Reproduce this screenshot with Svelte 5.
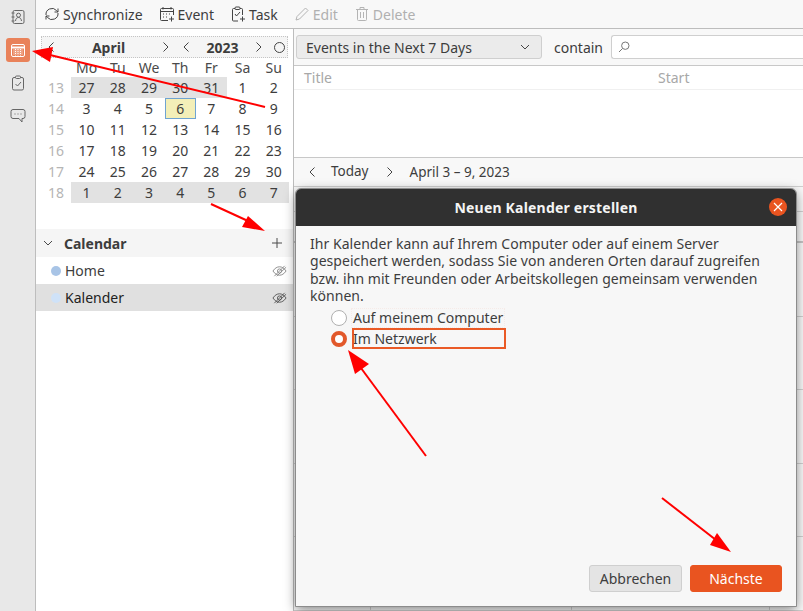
<script lang="ts">
	const weeks = [
		{ no: 13, days: [27, 28, 29, 30, 31, 1, 2], other: [0, 1, 2, 3, 4] },
		{ no: 14, days: [3, 4, 5, 6, 7, 8, 9], other: [] },
		{ no: 15, days: [10, 11, 12, 13, 14, 15, 16], other: [] },
		{ no: 16, days: [17, 18, 19, 20, 21, 22, 23], other: [] },
		{ no: 17, days: [24, 25, 26, 27, 28, 29, 30], other: [] },
		{ no: 18, days: [1, 2, 3, 4, 5, 6, 7], other: [0, 1, 2, 3, 4, 5, 6] }
	];
	const weekdays = ['Mo', 'Tu', 'We', 'Th', 'Fr', 'Sa', 'Su'];
	const calendars = [
		{ name: 'Home', color: '#a8c4e6', selected: false },
		{ name: 'Kalender', color: '#cfe2f8', selected: true }
	];
	const hours = [0, 1, 2, 3, 4];
</script>

<div class="app">
	<nav class="rail">
		<button class="rail-btn" aria-label="Address book">
			<svg viewBox="0 0 16 16" width="16" height="16" fill="none" stroke="#666">
				<rect x="3" y="1.5" width="11" height="13" rx="1.5" />
				<circle cx="8.5" cy="6.2" r="2" />
				<path d="M5.5 12c.3-2.5 1.5-3.500 3-3.500s2.700 1 3 3.500M1.500 4h3M1.500 8h3M1.500 12h3" />
			</svg>
		</button>
		<button class="rail-btn active" aria-label="Calendar">
			<svg viewBox="0 0 16 16" width="16" height="16" fill="none" stroke="#fff">
				<rect x="1.5" y="2.5" width="13" height="12" rx="1.5" />
				<path d="M1.5 5.500h13" stroke-width="2" />
				<path d="M3.5 8h9M3.500 10h9M3.500 12h9M5.500 7v6.500M8 7v6.500M10.500 7v6.500" stroke-dasharray="1 1" />
			</svg>
		</button>
		<button class="rail-btn" aria-label="Tasks">
			<svg viewBox="0 0 16 16" width="16" height="16" fill="none" stroke="#666">
				<rect x="2.5" y="2.5" width="11" height="12.5" rx="1.5" />
				<rect x="5.5" y="1" width="5" height="2.5" rx="1" fill="#e8e8e8" />
				<path d="M5.5 9l2 2 3.500-4" />
			</svg>
		</button>
		<button class="rail-btn" aria-label="Chat">
			<svg viewBox="0 0 16 16" width="16" height="16" fill="none" stroke="#666">
				<path d="M3 1.500h10a2 2 0 0 1 2 2v5a2 2 0 0 1-2 2h-1v3.500l-3-3.500H3a2 2 0 0 1-2-2v-5a2 2 0 0 1 2-2z" />
				<path d="M4.500 6h1M7.500 6h1M10.500 6h1" />
			</svg>
		</button>
	</nav>

	<div class="main">
		<header class="toolbar">
			<span class="tool">
				<svg viewBox="0 0 16 16" width="16" height="16" fill="none" stroke="#444">
					<path d="M2 9a6 6 0 0 1 10.500-4.500L14 6M14 7a6 6 0 0 1-10.500 4.500L2 10" />
					<path d="M14 2.500V6h-3.500M2 13.500V10h3.500" />
				</svg>
				Synchronize
			</span>
			<span class="tool">
				<svg viewBox="0 0 16 16" width="16" height="16" fill="none" stroke="#444">
					<path d="M9 14.500H2.500a1 1 0 0 1-1-1v-10a1 1 0 0 1 1-1h11a1 1 0 0 1 1 1V9" />
					<path d="M1.500 5.500h13M4 1v2.500M12 1v2.500M4 8h1M7 8h1M10 8h1M4 11h1M7 11h1M12.500 10.500v5M10 13h5" />
				</svg>
				Event
			</span>
			<span class="tool">
				<svg viewBox="0 0 16 16" width="16" height="16" fill="none" stroke="#444">
					<path d="M8 15H3.500a1 1 0 0 1-1-1V3.500a1 1 0 0 1 1-1h8a1 1 0 0 1 1 1V9" />
					<rect x="5" y="1" width="5" height="2.5" rx="1" fill="#f8f8f8" />
					<path d="M5 8l1.500 2L10 6M12.500 10.500v5M10 13h5" />
				</svg>
				Task
			</span>
			<span class="tool off">
				<svg viewBox="0 0 16 16" width="16" height="16" fill="none" stroke="#b4b4b4">
					<path d="M2 14l1-3.500L11.500 2 14 4.500 5.500 13z" />
				</svg>
				Edit
			</span>
			<span class="tool off">
				<svg viewBox="0 0 16 16" width="16" height="16" fill="none" stroke="#b4b4b4">
					<path d="M2 3.500h12M6 3.500V1.500h4v2M3.500 3.500v10a1 1 0 0 0 1 1h7a1 1 0 0 0 1-1v-10M6.500 6v6M9.500 6v6" />
				</svg>
				Delete
			</span>
		</header>

		<div class="content">
			<aside class="sidebar">
				<div class="minimonth">
					<div class="month-head">
						<span class="chev">
							<svg viewBox="0 0 8 12" width="8" height="12"><path d="M6.500 1.500 2 6l4.500 4.500" /></svg>
						</span>
						<strong class="month">April</strong>
						<span class="chev">
							<svg viewBox="0 0 8 12" width="8" height="12"><path d="M1.500 1.500 6 6l-4.500 4.500" /></svg>
						</span>
						<span class="chev">
							<svg viewBox="0 0 8 12" width="8" height="12"><path d="M6.500 1.500 2 6l4.500 4.500" /></svg>
						</span>
						<strong class="year">2023</strong>
						<span class="chev">
							<svg viewBox="0 0 8 12" width="8" height="12"><path d="M1.500 1.500 6 6l-4.500 4.500" /></svg>
						</span>
						<span class="today-dot"></span>
					</div>
					<div class="month-grid">
						<span></span>
						{#each weekdays as d}
							<span class="wd">{d}</span>
						{/each}
						{#each weeks as w}
							<span class="wk">{w.no}</span>
							{#each w.days as day, i}
								<span class="day" class:other={w.other.includes(i)} class:today={w.no === 14 && day === 6}>{day}</span>
							{/each}
						{/each}
					</div>
				</div>

				<div class="cal-section">
					<div class="cal-head">
						<svg class="cal-caret" viewBox="0 0 10 6" width="10" height="6"><path d="M1 1l4 4 4-4" /></svg>
						<strong>Calendar</strong>
						<svg class="cal-plus" viewBox="0 0 10 10" width="10" height="10"><path d="M5 0v10M0 5h10" /></svg>
					</div>
					{#each calendars as c}
						<div class="cal-row" class:selected={c.selected}>
							<span class="dot" style="background: {c.color}"></span>
							<span class="cal-name">{c.name}</span>
							<svg class="eye" viewBox="0 0 16 12" width="15" height="12" fill="none" stroke={c.selected ? '#555' : '#8a8a8a'}>
								<path d="M1 6c2-3 4.500-4.500 7-4.500S13 3 15 6c-2 3-4.500 4.500-7 4.500S3 9 1 6z" />
								<circle cx="8" cy="6" r="2.200" />
								<path d="M2.500 11.500 13.500.5M5 11.500 15 2" />
							</svg>
						</div>
					{/each}
				</div>
			</aside>

			<section class="pane">
				<div class="filter">
					<div class="select">
						<span>Events in the Next 7 Days</span>
						<svg viewBox="0 0 10 6" width="10" height="6"><path d="M1 1l4 4 4-4" /></svg>
					</div>
					<span class="contain">contain</span>
					<div class="search">
						<svg viewBox="0 0 12 12" width="12" height="12"><circle cx="7.300" cy="4.700" r="3.700" /><path d="M4.500 7.500 1 11" /></svg>
					</div>
				</div>
				<div class="list-head">
					<span class="col-title">Title</span>
					<span>Start</span>
				</div>
				<div class="list-body"></div>
				<div class="week-nav">
					<svg viewBox="0 0 8 12" width="8" height="12"><path d="M6.500 1.500 2 6l4.500 4.500" /></svg>
					<span class="nav-today">Today</span>
					<svg viewBox="0 0 8 12" width="8" height="12"><path d="M1.500 1.500 6 6l-4.500 4.500" /></svg>
					<span class="nav-range">April 3 – 9, 2023</span>
				</div>
				<div class="week-grid">
					<div class="week-header"></div>
					<div class="week-allday"></div>
					{#each hours as h (h)}
						<div class="hour">
							<span></span>
							<span></span>
							<span></span>
						</div>
					{/each}
				</div>
			</section>
		</div>
	</div>

	<div class="dialog" role="dialog" aria-label="Neuen Kalender erstellen">
		<div class="titlebar">
			<span>Neuen Kalender erstellen</span>
			<span class="close">
				<svg viewBox="0 0 10 10" width="10" height="10"><path d="M1 1l8 8M9 1l-8 8" /></svg>
			</span>
		</div>
		<div class="dialog-body">
			<p class="intro">
				Ihr Kalender kann auf Ihrem Computer oder auf einem Server<br />
				gespeichert werden, sodass Sie von anderen Orten darauf zugreifen<br />
				bzw. ihn mit Freunden oder Arbeitskollegen gemeinsam verwenden<br />
				können.
			</p>
			<div class="radio-row">
				<span class="radio"></span>
				<span class="radio-label">Auf meinem Computer</span>
			</div>
			<div class="radio-row">
				<span class="radio on"></span>
				<span class="radio-label focused">Im Netzwerk</span>
			</div>
			<div class="actions">
				<button class="btn">Abbrechen</button>
				<button class="btn primary">Nächste</button>
			</div>
		</div>
	</div>

	<!-- annotation arrows drawn over the screenshot -->
	<svg class="arrows" viewBox="0 0 803 611" width="803" height="611">
		<g stroke="#f00" stroke-width="2" fill="#f00">
			<path d="M265 107 50 55" />
			<path d="M32 51 53 47 50 62z" stroke="none" />
			<path d="M211 204 248 221" />
			<path d="M265 231 248 216 242 227z" stroke="none" />
			<path d="M426 456 358 364" />
			<path d="M348 350 369 364 355 374z" stroke="none" />
			<path d="M662 498 716 540" />
			<path d="M731 552 717 533 710 545z" stroke="none" />
		</g>
	</svg>
</div>

<style>
	:global(body) {
		margin: 0;
		background: #fff;
	}

	.app {
		position: relative;
		display: flex;
		width: 803px;
		height: 611px;
		overflow: hidden;
		font-family: 'Noto Sans', 'Open Sans', sans-serif;
		font-size: 14px;
		color: #3d3d3d;
		background: #fff;
	}

	.rail {
		flex: none;
		width: 35px;
		border-right: 1px solid #bdbdbd;
		background: #e8e8e8;
		display: flex;
		flex-direction: column;
		align-items: center;
		gap: 9px;
		padding-top: 5px;
	}

	.rail-btn {
		width: 24px;
		height: 24px;
		padding: 0;
		border: none;
		border-radius: 3px;
		background: transparent;
		display: flex;
		align-items: center;
		justify-content: center;
	}

	.rail-btn.active {
		background: #e9825a;
	}

	.main {
		flex: 1;
		min-width: 0;
		display: flex;
		flex-direction: column;
	}

	.toolbar {
		flex: none;
		height: 29px;
		box-sizing: border-box;
		display: flex;
		align-items: center;
		gap: 16px;
		padding: 0 8px;
		background: #f8f8f8;
		border-bottom: 1px solid #bdbdbd;
	}

	.tool {
		display: flex;
		align-items: center;
		gap: 3px;
		white-space: nowrap;
	}

	.tool.off {
		color: #b0b0b0;
	}

	.content {
		flex: 1;
		min-height: 0;
		display: flex;
	}

	.sidebar {
		flex: none;
		width: 257px;
		background: #fff;
		border-right: 1px solid #bdbdbd;
		display: flex;
		flex-direction: column;
	}

	.minimonth {
		height: 200px;
		padding: 7px 5px 0 5px;
		box-sizing: border-box;
	}

	.month-head {
		height: 22px;
		width: 247px;
		box-sizing: border-box;
		display: flex;
		align-items: center;
		background: #f5f5f5;
		border: 1px dotted #c4c4c4;
		margin-bottom: -2px;
	}

	.chev {
		flex: none;
		width: 20px;
		display: flex;
		justify-content: center;
	}

	.month-head .chev:first-child {
		margin-left: -1px;
	}

	.chev svg path,
	.week-nav svg path {
		fill: none;
		stroke: #444;
	}

	.month {
		width: 95px;
		text-align: center;
		font-weight: 700;
	}

	.year {
		width: 53px;
		text-align: center;
		font-weight: 700;
	}

	.today-dot {
		width: 9px;
		height: 9px;
		margin-left: 4.5px;
		border: 1px solid #444;
		border-radius: 50%;
	}

	.month-grid {
		display: grid;
		grid-template-columns: 30px repeat(7, 31.2px);
		grid-auto-rows: 21px;
		height: 147px;
		text-align: center;
	}

	.month-grid > span {
		line-height: 21px;
	}

	.month-grid > .wd {
		color: #4a4a4a;
		line-height: 24px;
	}

	.wk {
		color: #b5b5b5;
	}

	.day.other {
		background: #e2e2e2;
	}

	.month-grid > .day.today {
		box-sizing: border-box;
		background: #f3efb8;
		border: 1px solid #6fa4d2;
		line-height: 19px;
	}

	.cal-head {
		height: 28px;
		display: flex;
		align-items: center;
		background: #f5f5f5;
		padding: 0 11px 0 7px;
	}

	.cal-head strong {
		margin-left: 11px;
		flex: 1;
		font-weight: 700;
	}

	.cal-caret path,
	.cal-plus path {
		fill: none;
		stroke: #4a4a4a;
	}

	.cal-row {
		height: 27px;
		display: flex;
		align-items: center;
		padding: 0 6px 0 15px;
	}

	.cal-row.selected {
		background: #e0e0e0;
		color: #222;
	}

	.dot {
		width: 10px;
		height: 10px;
		border-radius: 50%;
		margin-right: 4px;
	}

	.cal-name {
		flex: 1;
	}

	.pane {
		flex: 1;
		min-width: 0;
		display: flex;
		flex-direction: column;
		background: #fff;
	}

	.filter {
		flex: none;
		height: 37px;
		box-sizing: border-box;
		display: flex;
		align-items: center;
		padding: 6px 0 6px 2px;
		background: #f8f8f8;
		border-bottom: 1px solid #c8c8c8;
	}

	.select {
		width: 246px;
		height: 24px;
		box-sizing: border-box;
		display: flex;
		align-items: center;
		justify-content: space-between;
		padding: 0 11px 0 9px;
		background: #ebebeb;
		border: 1px solid #cfcfcf;
		border-radius: 3px;
	}

	.select svg path {
		fill: none;
		stroke: #444;
	}

	.contain {
		margin: 0 8px 0 12px;
	}

	.search {
		flex: 1;
		height: 24px;
		box-sizing: border-box;
		display: flex;
		align-items: center;
		padding-left: 6px;
		background: #fff;
		border: 1px solid #cfcfcf;
		border-right: none;
		border-radius: 3px 0 0 3px;
	}

	.search svg circle,
	.search svg path {
		fill: none;
		stroke: #777;
	}

	.list-head {
		flex: none;
		height: 24px;
		box-sizing: border-box;
		display: flex;
		align-items: center;
		padding-left: 10px;
		color: #a8a8a8;
		border-bottom: 1px solid #f0f0f0;
	}

	.col-title {
		width: 354px;
	}

	.list-body {
		flex: none;
		height: 67px;
		border-bottom: 1px solid #c8c8c8;
	}

	.week-nav {
		flex: none;
		height: 28px;
		display: flex;
		align-items: center;
		gap: 15px;
		padding-left: 14px;
		background: #f8f8f8;
		font-size: 13.500px;
	}

	.nav-today {
		margin: -2px 2px 0 0;
	}

	.nav-range {
		margin-left: 1px;
	}

	.week-grid {
		flex: 1;
		min-height: 0;
		background: #f8f8f8;
		border-top: 1px solid #d0d0d0;
	}

	.week-header {
		height: 24px;
		border-bottom: 1px solid #d0d0d0;
	}

	.week-allday {
		height: 29px;
		border-bottom: 2px solid #c4c4c4;
	}

	.hour {
		height: 73.500px;
		box-sizing: border-box;
		display: grid;
		grid-template-columns: 77px 201px 198px 1fr;
		border-bottom: 1px solid #d0d0d0;
	}

	.hour span {
		border-right: 1px solid #d0d0d0;
	}

	.dialog {
		position: absolute;
		left: 296px;
		top: 189px;
		width: 500px;
		height: 417px;
		display: flex;
		flex-direction: column;
		background: #f7f7f7;
		border-radius: 5px 5px 0 0;
		outline: 1px solid #8c8c8c;
		box-shadow: 0 3px 12px rgba(0, 0, 0, 0.5);
	}

	.titlebar {
		position: relative;
		flex: none;
		height: 37px;
		display: flex;
		align-items: center;
		justify-content: center;
		background: #303030;
		border-radius: 5px 5px 0 0;
		color: #f4f4f4;
		font-weight: 700;
		letter-spacing: 0.2px;
	}

	.close {
		position: absolute;
		right: 9px;
		top: 9px;
		width: 18px;
		height: 18px;
		border-radius: 50%;
		background: #e95420;
		display: flex;
		align-items: center;
		justify-content: center;
	}

	.close svg path {
		fill: none;
		stroke: #fff;
		stroke-width: 1.200;
	}

	.dialog-body {
		flex: 1;
		display: flex;
		flex-direction: column;
		padding: 9px 14px 14px 14px;
		min-height: 0;
	}

	.intro {
		margin: 0 0 3px;
		line-height: 17.300px;
		letter-spacing: 0.04px;
		white-space: nowrap;
	}

	.radio-row {
		display: flex;
		align-items: center;
		height: 21px;
		margin-left: 21px;
		gap: 5px;
	}

	.radio {
		width: 16px;
		height: 16px;
		box-sizing: border-box;
		border-radius: 50%;
		background: #fff;
		border: 1px solid #b0b0b0;
	}

	.radio.on {
		border: 4px solid #e2582a;
	}

	.radio-label {
		width: 152px;
		box-sizing: border-box;
		padding: 0 1px;
		height: 18px;
		line-height: 18px;
		white-space: nowrap;
		outline: 1px dotted #f6ebe8;
	}

	.radio-label.focused {
		width: 154px;
		height: 21px;
		border: 2px solid #ea5a26;
		outline: none;
		line-height: 17px;
		padding: 0;
		text-indent: -1px;
	}

	.actions {
		margin-top: auto;
		display: flex;
		justify-content: flex-end;
		gap: 8px;
	}

	.btn {
		height: 27px;
		padding: 0;
		font: inherit;
		border-radius: 3px;
		color: #3d3d3d;
		background: #e4e4e4;
		border: 1px solid #cfcfcf;
		width: 93px;
	}

	.btn.primary {
		width: 92px;
		background: #e95420;
		border-color: #e95420;
		color: #fff;
	}

	.arrows {
		position: absolute;
		inset: 0;
		pointer-events: none;
	}
</style>
